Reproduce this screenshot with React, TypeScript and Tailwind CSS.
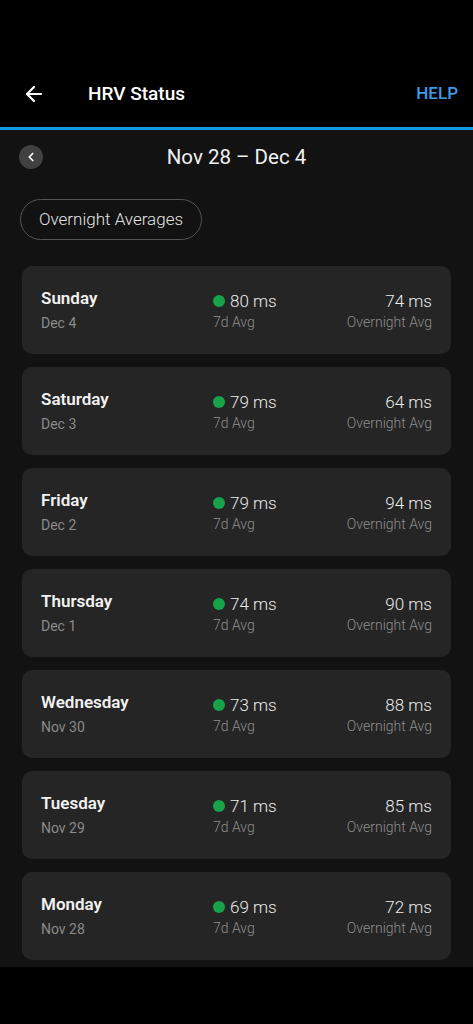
import { ArrowLeft, ChevronLeft } from 'lucide-react'

interface DayRow {
  day: string
  date: string
  avg7d: number
  overnight: number
}

const rows: DayRow[] = [
  { day: 'Sunday', date: 'Dec 4', avg7d: 80, overnight: 74 },
  { day: 'Saturday', date: 'Dec 3', avg7d: 79, overnight: 64 },
  { day: 'Friday', date: 'Dec 2', avg7d: 79, overnight: 94 },
  { day: 'Thursday', date: 'Dec 1', avg7d: 74, overnight: 90 },
  { day: 'Wednesday', date: 'Nov 30', avg7d: 73, overnight: 88 },
  { day: 'Tuesday', date: 'Nov 29', avg7d: 71, overnight: 85 },
  { day: 'Monday', date: 'Nov 28', avg7d: 69, overnight: 72 },
]

function DayCard({ row }: { row: DayRow }) {
  return (
    <li className="h-[88px] rounded-[10px] bg-[#252525] flex items-center pl-[19px] pr-[19px]">
      <div className="w-[172px] flex flex-col">
        <span className="text-[17px] leading-[21px] font-semibold text-[#f2f2f2]">{row.day}</span>
        <span className="mt-[5px] text-[14px] leading-[18px] text-[#8a8a8a]">{row.date}</span>
      </div>
      <div className="flex flex-col">
        <div className="flex items-center gap-[5px]">
          <span className="w-[12px] h-[12px] rounded-full bg-[#16a34a]" />
          <span className="text-[17px] leading-[22px] font-light text-[#ececec]">{row.avg7d} ms</span>
        </div>
        <span className="mt-[1px] text-[14px] leading-[18px] font-light text-[#8e8e8e]">7d Avg</span>
      </div>
      <div className="ml-auto flex flex-col items-end">
        <span className="text-[17px] leading-[22px] font-light text-[#ececec]">{row.overnight} ms</span>
        <span className="mt-[1px] text-[14px] leading-[18px] font-light text-[#8e8e8e]">Overnight Avg</span>
      </div>
    </li>
  )
}

export default function App() {
  return (
    <div className="w-[473px] h-[1024px] bg-black flex flex-col font-['Roboto',sans-serif]">
      <div className="h-[61px]" />
      <header className="h-[66px] flex items-center pl-[22px] pr-[15px]">
        <ArrowLeft className="w-[24px] h-[24px] text-white" strokeWidth={2.2} />
        <h1 className="ml-[42px] text-[19px] font-medium text-white">HRV Status</h1>
        <span className="ml-auto text-[17px] font-medium text-[#3d9be9]">HELP</span>
      </header>
      <div className="h-[3px] bg-[#1599e0]" />
      <main className="bg-[#121212] flex flex-col pb-[7px]">
        <div className="h-[54px] flex items-center relative px-[19px]">
          <button className="w-[24px] h-[24px] rounded-full bg-[#414141] flex items-center justify-center">
            <ChevronLeft className="w-[14px] h-[14px] text-white" strokeWidth={3} />
          </button>
          <span className="absolute left-0 right-0 text-center text-[20.5px] text-[#f0f0f0] pointer-events-none">
            Nov 28 – Dec 4
          </span>
        </div>
        <div className="px-[20px] mt-[15px]">
          <span className="inline-flex items-center h-[41px] px-[18px] rounded-full border border-[#555] text-[17px] font-light text-[#e4e4e4]">
            Overnight Averages
          </span>
        </div>
        <ul className="mt-[26px] px-[22px] flex flex-col gap-[13px]">
          {rows.map((r) => (
            <DayCard key={r.day} row={r} />
          ))}
        </ul>
      </main>
    </div>
  )
}
